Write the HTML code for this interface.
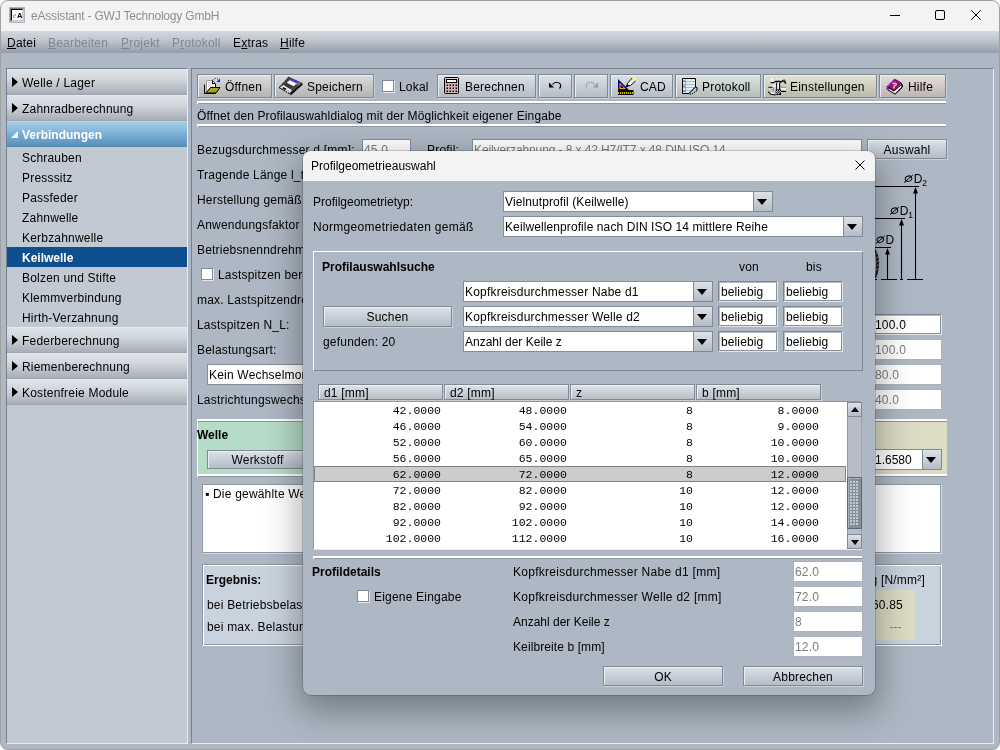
<!DOCTYPE html>
<html lang="de"><head><meta charset="utf-8"><title>eAssistant - GWJ Technology GmbH</title>
<style>
*{box-sizing:border-box;margin:0;padding:0}
html,body{width:1000px;height:750px;overflow:hidden;background:#fff}
body{font-family:"Liberation Sans",sans-serif;font-size:12px;color:#000;position:relative}
.a{position:absolute;white-space:nowrap}
#win{will-change:transform;left:0;top:0;width:1000px;height:750px;border-radius:8px;overflow:hidden;background:#adb8c4}
#winb{left:0;top:0;width:1000px;height:750px;border-radius:8px;border:1px solid #a0a0a0;pointer-events:none}
#title{left:0;top:0;width:1000px;height:31px;background:#f3f3f3}
#title .t{left:31px;top:9px;font-size:12px;letter-spacing:-.2px;color:#8e8e8e;line-height:15px}
#menu{left:0;top:31px;width:1000px;height:22px;background:linear-gradient(#d3d8df 0%,#c1c7cf 40%,#949da8 100%)}
#menu span{position:absolute;top:5px;line-height:15px;font-size:12px;letter-spacing:.2px}
#menu .d{color:#7f8791}
u{text-decoration:underline;text-underline-offset:1px}
/* sidebar */
#side{left:6px;top:68px;width:182px;height:676px;background:#c1c9d2;border:1px solid #78828d;border-right-color:#e9edf1;border-bottom-color:#e9edf1}
.sh{left:0;width:180px;height:26px;background:linear-gradient(#dfe3e8 0%,#d3d8de 35%,#bfc5cd 65%,#a7aeb8 100%);border-top:1px solid #e6e9ed;border-bottom:1px solid #9da5af;line-height:24px;padding:1px 0 0 15px;font-size:12px;letter-spacing:.2px}
.sh.sel{background:linear-gradient(#a6cce6 0%,#84b6da 40%,#6ba2cb 70%,#5b90b9 100%);color:#fff;font-weight:bold;border-top-color:#b4d4ea;border-bottom-color:#5587ad;letter-spacing:0}
.tri{position:absolute;left:5px;top:7px;width:0;height:0;border-left:6px solid #000;border-top:5px solid transparent;border-bottom:5px solid transparent}
.tri2{position:absolute;left:4px;top:9px;width:0;height:0;border-bottom:7px solid #fff;border-left:7px solid transparent}
.si{left:15px;height:20px;line-height:22px;font-size:12px;letter-spacing:.2px}
.sisel{left:0;width:180px;height:20px;background:#0e4f90;color:#fff;font-weight:bold;line-height:22px;padding-left:15px;font-size:12px}
/* main */
#main{left:191px;top:68px;width:803px;height:676px;border:1px solid #78828d;border-right-color:#e9edf1;border-bottom-color:#e9edf1;background:#adb8c4}
.btn{height:24px;border:1px solid #808a95;background:linear-gradient(#dde2e8 0%,#b4bcc6 100%);box-shadow:inset 1px 1px 0 #eceff2,1px 1px 0 #c9d0d8;line-height:22px;text-align:center;font-size:12px;letter-spacing:.2px}
.tf{height:21px;background:#fff;border:1px solid #848e99;line-height:19px;padding:1px 0 0 1px;font-size:12px;letter-spacing:.2px}
.tf.dis{color:#7c7c7c}
.lb{font-size:12px;letter-spacing:.2px;line-height:15px}
.sep{height:3px;background:linear-gradient(#fff 0,#fff 2px,#8d97a2 2px,#8d97a2 3px);border-left:1px solid #fff}
.cb{width:12px;height:12px;background:#fff;border:1px solid #7f8a96;box-shadow:1px 1px 0 #e4e8ed}
.btn.g{background:linear-gradient(#dcdcdc 0%,#b4b4b4 100%)}
.btn.gr{background:linear-gradient(#dde4df 0%,#b4beb9 100%)}
.btn.ye{background:linear-gradient(#e2e3d6 0%,#babbab 100%)}
.btn.pk{background:linear-gradient(#e5dedb 0%,#bfb5b2 100%)}
.dn{position:absolute;left:50%;top:50%;margin:-3px 0 0 -5px;width:0;height:0;border-top:6px solid #000;border-left:5px solid transparent;border-right:5px solid transparent}
.mono{font-family:"Liberation Mono",monospace;font-size:11.500px;line-height:18px}
.th{height:16px;border:1px solid #808a95;background:linear-gradient(#dfe4e9 0%,#b6bec8 100%);box-shadow:inset 1px 1px 0 #eef1f4,1px 1px 0 #c9d0d8;line-height:15px;padding:1px 0 0 5px;font-size:12px;letter-spacing:.2px}
.up{position:absolute;left:50%;top:50%;margin:-3px 0 0 -4px;width:0;height:0;border-bottom:5px solid #000;border-left:4px solid transparent;border-right:4px solid transparent}
.thumb{border:1px solid #5f6974;background:#858f9a;box-shadow:inset 1px 1px 0 #a9b2bc}.thumb:after{content:'';position:absolute;left:2px;right:2px;top:3px;bottom:3px;background-image:radial-gradient(circle at 1px 1px,#c3cad2 0.7px,transparent 0.9px);background-size:3px 3px}
.tf.bev{border-color:#7c8691 #e3e7eb #e3e7eb #7c8691;box-shadow:inset 1px 1px 0 #b4bcc6,inset -1px -1px 0 #87919c;padding-left:2px}
/* dialog */
#dlg{left:303px;top:151px;width:572px;height:544px;border-radius:8px;background:#adb8c4;box-shadow:0 0 0 1px rgba(0,0,0,.16),0 12px 34px 4px rgba(0,0,0,.34);overflow:hidden}
#dlgt{left:0;top:0;width:572px;height:30px;background:#f3f3f3}
</style></head><body>
<div id="win" class="a">
 <div id="title" class="a">
  <svg class="a" style="left:9px;top:7px" width="16" height="16" viewBox="0 0 16 16"><rect x="0" y="0" width="16" height="16" fill="#a9b6c3"/><rect x="1" y="1" width="14" height="14" fill="#cdcdcd"/><path d="M1 1H15L14 2H2V14L1 15Z" fill="#7c7c7c"/><path d="M2 2H14L13 3H3V13L2 14Z" fill="#000"/><rect x="3" y="3" width="10" height="10" fill="#fff"/><text x="8" y="10.500" font-family="Liberation Sans,sans-serif" font-size="7.500" font-weight="bold" fill="#000">A</text><text x="4" y="10.500" font-family="Liberation Serif,serif" font-size="7.500" font-style="italic" fill="#666">e</text></svg>
  <div class="a t">eAssistant - GWJ Technology GmbH</div>
  <svg class="a" style="left:885px;top:5px" width="105" height="22" viewBox="0 0 105 22" fill="none" stroke="#000" stroke-width="1"><path d="M5 10.500H15"/><rect x="50.5" y="5.500" width="9" height="9" rx="1.5"/><path d="M86.300 5.300L95.700 14.700M95.700 5.300L86.300 14.700"/></svg>
 </div>
 <div id="menu" class="a">
  <span style="left:7px"><u>D</u>atei</span><span class="d" style="left:48px"><u>B</u>earbeiten</span><span class="d" style="left:121px"><u>P</u>rojekt</span><span class="d" style="left:172px">P<u>r</u>otokoll</span><span style="left:233px">E<u>x</u>tras</span><span style="left:280px"><u>H</u>ilfe</span>
 </div>
 <div id="side" class="a">
  <div class="a sh" style="top:0"><i class="tri"></i>Welle / Lager</div>
  <div class="a sh" style="top:26px"><i class="tri"></i>Zahnradberechnung</div>
  <div class="a sh sel" style="top:52px"><i class="tri2"></i>Verbindungen</div>
  <div class="a si" style="top:78px">Schrauben</div>
  <div class="a si" style="top:98px">Presssitz</div>
  <div class="a si" style="top:118px">Passfeder</div>
  <div class="a si" style="top:138px">Zahnwelle</div>
  <div class="a si" style="top:158px">Kerbzahnwelle</div>
  <div class="a sisel" style="top:178px">Keilwelle</div>
  <div class="a si" style="top:198px">Bolzen und Stifte</div>
  <div class="a si" style="top:218px">Klemmverbindung</div>
  <div class="a si" style="top:238px">Hirth-Verzahnung</div>
  <div class="a sh" style="top:258px"><i class="tri"></i>Federberechnung</div>
  <div class="a sh" style="top:284px"><i class="tri"></i>Riemenberechnung</div>
  <div class="a sh" style="top:310px"><i class="tri"></i>Kostenfreie Module</div>
 </div>
 <div id="main" class="a">
 
  <!-- toolbar -->
  <div class="a btn g" style="left:5px;top:5px;width:75px"></div>
  <div class="a btn g" style="left:82px;top:5px;width:100px"></div>
  <div class="a cb" style="left:190px;top:11px"></div><div class="a lb" style="left:207px;top:11px">Lokal</div>
  <div class="a btn" style="left:245px;top:5px;width:99px"></div>
  <div class="a btn" style="left:346px;top:5px;width:34px"></div>
  <div class="a btn" style="left:382px;top:5px;width:34px"></div>
  <div class="a btn" style="left:418px;top:5px;width:63px"></div>
  <div class="a btn gr" style="left:483px;top:5px;width:86px"></div>
  <div class="a btn ye" style="left:571px;top:5px;width:114px"></div>
  <div class="a btn pk" style="left:687px;top:5px;width:67px"></div>

  <svg class="a" style="left:0;top:0" width="770" height="34" viewBox="192 69 770 34" fill="none" stroke-width="1">
   <!-- open -->
   <path d="M206 80H212.500L215.500 83V88H210L206 92Z" fill="#fff"/>
   <path d="M206.500 92V80.500H212.500" stroke="#9a9a9a"/>
   <path d="M208 82.500H211.500M208 84.500H213.500M208 86.500H213.500" stroke="#d0d0d0"/>
   <path d="M212 80.500L215.500 84V87.500" stroke="#000"/>
   <path d="M212 80V84H215.500Z" fill="#000"/><rect x="213" y="82" width="1" height="1" fill="#fff"/>
   <path d="M204.500 84.500V93.500H216" stroke="#000"/>
   <path d="M205.500 85.500V92.500" stroke="#d6d64c"/>
   <path d="M206 93L210.500 87.500H220L216 93Z" fill="#a6a61c" stroke="#000"/>
   <path d="M213 80.500C214 78 217 77.500 218.500 80" stroke="#2b2bff" stroke-dasharray="1.5 1"/>
   <path d="M220 78.500V82H216.500Z" fill="#1a1aff"/>
   <!-- save -->
   <path d="M288.500 77L302.500 83.500L291 94.500L279 87.500Z" fill="#3c3c3c" stroke="#2a1a2a" stroke-dasharray="1 1"/>
   <path d="M289 77.500L302 83.500L291 94L279.500 87.500Z" fill="#454545"/>
   <path d="M297.500 81.500L302 83.700L299.500 86.200L295.300 84Z" fill="#6c6c6c"/>
   <path d="M290.300 79.700L297.300 83L293.600 86.300L286.800 82.700Z" fill="#fff"/>
   <path d="M290.500 78.500L297.500 82L296.500 83.500L289.500 80Z" fill="#3a3aff"/>
   <path d="M280 87.500L283.500 85L292 90.300L289 93.500Z" fill="#e8e8e8"/>
   <path d="M283.500 87L286.500 88.700L285.300 90.300L282.300 88.600Z" fill="#111"/>
   <path d="M286.500 90L289.500 91.500" stroke="#888" stroke-dasharray="1 1"/>
   <path d="M286 83.500L292 87M285 85L290 88" stroke="#111" stroke-dasharray="1 1"/>
   <path d="M290.800 94.300L302.300 83.900" stroke="#000" stroke-width="1.500"/>
   <path d="M279.300 87.800L290.800 94.300" stroke="#000" stroke-width="1" stroke-dasharray="1.500 1"/>
   <!-- calc -->
   <rect x="444.500" y="77.500" width="14" height="16" rx="1" fill="#d8b0b6" stroke="#000"/>
   <path d="M445.500 78.500H457.500" stroke="#ecd3d6"/>
   <rect x="446.500" y="79.500" width="10" height="3" fill="#fff" stroke="#000"/>
   <g fill="#000"><rect x="446.500" y="84.500" width="1.500" height="1.500"/><rect x="449.500" y="84.500" width="1.500" height="1.500"/><rect x="452.500" y="84.500" width="1.500" height="1.500"/><rect x="455.500" y="84.500" width="1.500" height="1.500"/>
   <rect x="446.500" y="87.500" width="1.500" height="1.500"/><rect x="449.500" y="87.500" width="1.500" height="1.500"/><rect x="452.500" y="87.500" width="1.500" height="1.500"/><rect x="455.500" y="87.500" width="1.500" height="1.500"/>
   <rect x="446.500" y="90.500" width="1.500" height="1.500"/><rect x="449.500" y="90.500" width="1.500" height="1.500"/><rect x="452.500" y="90.500" width="1.500" height="1.500"/><rect x="455.500" y="90.500" width="1.500" height="1.500"/></g>
   <!-- undo / redo -->
   <path d="M549 82.500V87.500H554Z" fill="#000"/>
   <path d="M552.500 84.500C554.500 81.500 559 81.500 560.500 84.500C561 86 560.500 87.500 559.500 88.500" stroke="#000" stroke-width="1.200"/>
   <path d="M598 82.500V87.500H593Z" fill="#9a9a9a"/>
   <path d="M594.500 84.500C592.500 81.500 588 81.500 586.500 84.500C586 86 586.500 87.500 587.500 88.500" stroke="#9a9a9a" stroke-width="1.100" stroke-dasharray="2 .6"/>
   <!-- CAD -->
   <path d="M618 79V90.500H629.500Z" fill="#000080"/>
   <path d="M619.500 82.500V89H626Z" fill="#ff9a0a"/>
   <path d="M621 85.500V87.500H623Z" fill="#000080" stroke="#000080"/>
   <rect x="618" y="90" width="15.500" height="5" fill="#000"/>
   <path d="M618 93H633" stroke="#ff0" stroke-width="1.600" stroke-dasharray="1.200 .8"/>
   <path d="M626.500 86.500L627.500 83.500L632 78L635.500 81L630.500 85.500Z" fill="#fff" stroke="#000"/>
   <path d="M631.500 78L634 76.500L636.500 79L635.500 81.500Z" fill="#ff0"/>
   <path d="M633 77L635.500 80" stroke="#fff"/>
   <path d="M626 87L628.500 85.500L627.500 84.500Z" fill="#000" stroke="#000"/>
   <!-- Protokoll -->
   <path d="M682.500 78.500H695.500V87L689 93.500H682.500Z" fill="#eceaea" stroke="#000" stroke-linejoin="miter"/>
   <path d="M683 81.500H695M683 84.500H695M683 87.500H694M683 90.500H691" stroke="#8cc4ea"/>
   <path d="M685.500 79V93" stroke="#ff7f7f"/>
   <path d="M684 80.500V82M684 85.500V87M684 90.500V92" stroke="#222"/>
   <path d="M689 93.500L695.500 87L697 87.500V90.500L692 93.500Z" fill="#c4c4c4"/>
   <path d="M689 93.500L695.500 87L697 87.500V90.500" stroke="#000"/>
   <path d="M697 90.500L692 94H689" stroke="#000" stroke-dasharray="1.500 .8"/>
   <!-- settings -->
   <path d="M770.400 77.300H781C783.500 77.800 785.600 80.300 786 83.600C785 82 784 81 782.600 80.700L780.600 82.300L780 81.200H776L773.200 82.800H770.400Z" fill="#d6d6d6"/>
   <path d="M771 78H774L773 81.500H771Z" fill="#f4f4f4"/>
   <path d="M776 78H781.500L783.500 79.500H775.500Z" fill="#e9e9e9"/>
   <path d="M770.700 82.700H773.300L775.900 81.300H780.100L780.700 82.400L782.700 80.700C784.200 81.100 785.200 82.200 785.800 83.800" stroke="#000" stroke-width="1.200"/>
   <path d="M785.700 83.300C785.500 81.600 784.900 80.300 784 79.400" stroke="#222" stroke-width="1"/>
   <path d="M773 84.500H776.500V94.500H772L768.500 91.700L771.500 92.300L772.800 91V88L771.500 87L768.800 86.800Z" fill="#d0d0d0"/>
   <path d="M769.500 86L773 84.800H776V86.500H772Z" fill="#f0f0f0"/>
   <path d="M769.500 92.300L772 94H774.500V93L772.500 92.800Z" fill="#f2f2f2"/>
   <path d="M768.300 87.300H772.500M768.200 91.600L770.800 94.300L775.500 95" stroke="#000" stroke-width="1.100"/>
   <path d="M773.300 87.500V91.500" stroke="#777"/>
   <rect x="776.500" y="82.800" width="3.200" height="6.700" fill="#e6e6e6"/>
   <path d="M776.700 82.500V89.500M779.600 82.500V89.500" stroke="#000" stroke-width="1.100"/>
   <path d="M778 83.500V89" stroke="#fff" stroke-width="1.100"/>
   <rect x="775.700" y="89.300" width="5.300" height="5.700" fill="#000"/>
   <g fill="#e8e8e8"><rect x="777" y="90.300" width="1" height="1"/><rect x="779" y="90.300" width="1" height="1"/><rect x="778" y="91.300" width="1" height="1"/><rect x="777" y="92.300" width="1" height="1"/><rect x="779" y="92.300" width="1" height="1"/><rect x="778" y="93.300" width="1" height="1"/><rect x="776" y="91.300" width="1" height="1"/><rect x="776" y="93.300" width="1" height="1"/><rect x="780" y="91.300" width="1" height="1"/></g>
   <path d="M781 87.300H786V91.200H781Z" fill="#e9e9e9"/><path d="M780.500 87.300H786" stroke="#8c8c8c"/><path d="M781 88.500H786" stroke="#fff"/><path d="M781 91.400H786" stroke="#000" stroke-width="1.100"/>
   <!-- help -->
   <path d="M888 87.500L894 91L902 84V87L895 94L888 90Z" fill="#e8ece8" stroke="#000"/>
   <path d="M894.500 79L901.500 83L894 90.500L887 86.500Z" fill="#9c06a8" stroke="#000" stroke-width=".6"/>
   <path d="M887.500 86L894 79.500" stroke="#ddd" stroke-dasharray="1 1"/>
   <path d="M887 86.500V90M895 94.500L902.500 87.500" stroke="#9c06a8"/>
   <path d="M901.500 83.500L902.500 87" stroke="#000"/>
   <text x="892" y="88.300" font-family="Liberation Sans,sans-serif" font-weight="bold" font-size="8" fill="#fff200" stroke="#fff200" stroke-width=".3" transform="rotate(10 895 85)">?</text>
  </svg>
  <div class="a lb" style="left:33px;top:11px">Öffnen</div>
  <div class="a lb" style="left:115px;top:11px">Speichern</div>
  <div class="a lb" style="left:273px;top:11px">Berechnen</div>
  <div class="a lb" style="left:448px;top:11px">CAD</div>
  <div class="a lb" style="left:510px;top:11px">Protokoll</div>
  <div class="a lb" style="left:598px;top:11px">Einstellungen</div>
  <div class="a lb" style="left:716px;top:11px">Hilfe</div>
  <div class="a sep" style="left:5px;top:32px;width:749px"></div>
  <div class="a lb" style="left:5px;top:40px;letter-spacing:.12px">Öffnet den Profilauswahldialog mit der Möglichkeit eigener Eingabe</div>
  <div class="a sep" style="left:5px;top:55px;width:749px"></div>
  <!-- form -->
  <div class="a lb" style="left:5px;top:74px">Bezugsdurchmesser d [mm]:</div>
  <div class="a tf dis" style="left:170px;top:70px;width:49px">45.0</div>
  <div class="a lb" style="left:235px;top:74px">Profil:</div>
  <div class="a tf dis" style="left:280px;top:70px;width:390px;letter-spacing:-.1px">Keilverzahnung - 8 x 42 H7/IT7 x 48 DIN ISO 14</div>
  <div class="a btn" style="left:675px;top:70px;width:80px;height:20px;line-height:20px">Auswahl</div>
  <div class="a lb" style="left:5px;top:99px">Tragende Länge l_tr [mm]:</div>
  <div class="a lb" style="left:5px;top:124px">Herstellung gemäß</div>
  <div class="a lb" style="left:5px;top:149px">Anwendungsfaktor K_A:</div>
  <div class="a lb" style="left:5px;top:174px">Betriebsnenndrehmoment T [Nm]:</div>
  <div class="a cb" style="left:9px;top:199px"></div><div class="a lb" style="left:26px;top:199px">Lastspitzen berücksichtigen</div>
  <div class="a lb" style="left:5px;top:224px">max. Lastspitzendrehmoment T_max [Nm]:</div>
  <div class="a lb" style="left:5px;top:249px">Lastspitzen N_L:</div>
  <div class="a lb" style="left:5px;top:274px">Belastungsart:</div>
  <div class="a tf" style="left:15px;top:295px;width:300px">Kein Wechselmoment</div>
  <div class="a lb" style="left:5px;top:324px">Lastrichtungswechsel N_W:</div>
  <div class="a tf bev" style="left:600px;top:245px;width:150px;padding-left:82px">100.0</div>
  <div class="a tf dis" style="left:600px;top:270px;width:150px;padding-left:82px;border-color:#a9b3be">100.0</div>
  <div class="a tf dis" style="left:600px;top:295px;width:150px;padding-left:82px;border-color:#a9b3be">80.0</div>
  <div class="a tf dis" style="left:600px;top:320px;width:150px;padding-left:82px;border-color:#a9b3be">40.0</div>
  <!-- diagram -->
  <svg class="a" style="left:659px;top:94px" width="100" height="125" viewBox="851 163 100 125" fill="none" stroke="#000" stroke-width="1.100">
   <path d="M860 186.500H919M915.500 188V279M860 218.500H905M901.500 220V279M860 247.500H891M887.500 249V279M875 279.500H877M881 279.500H897M900 279.500H903M907 279.500H923"/>
   <path d="M915.500 187L918 193.500H913Z M901.500 219L904 225.500H899Z M887.500 248L890 254.500H885Z" fill="#000" stroke="none"/>
   <path d="M875 249.500C880 257 879.500 269 875.500 278C877 268 877 258 875 249.500Z" fill="#111" stroke="#111" stroke-width=".8"/>
   <path d="M875.500 254L878.500 252.500M876 258L879 256.500M876.200 262L879.200 260.500M876.200 266L879 264.500M876 270L878.500 268.500" stroke="#c9ced4" stroke-width=".6"/>
   <g fill="#000" stroke="none" font-family="Liberation Sans,sans-serif" font-size="12">
    <text x="913.700" y="182.800">D</text><text x="922.300" y="185.800" font-size="8.500">2</text>
    <text x="899.700" y="214.800">D</text><text x="908.300" y="217.800" font-size="8.500">1</text>
    <text x="885.500" y="243.800">D</text>
   </g>
   <g stroke-width="1"><ellipse cx="908.5" cy="178.7" rx="3.300" ry="2.600" transform="rotate(-22 908.5 178.7)"/><path d="M903.9 182.7L912.8 175.1"/><ellipse cx="894.5" cy="210.7" rx="3.300" ry="2.600" transform="rotate(-22 894.5 210.7)"/><path d="M889.9 214.7L898.8 207.1"/><ellipse cx="880.3" cy="239.7" rx="3.300" ry="2.600" transform="rotate(-22 880.3 239.7)"/><path d="M875.6999999999999 243.7L884.5999999999999 236.1"/></g>
  </svg>
  <!-- green / yellow panels -->
  <div class="a" style="left:5px;top:350px;width:381px;height:58px;background:linear-gradient(#fff 0,#fff 2px,#8d97a2 2px,#8d97a2 3px,#b5dcc6 3px,#b5dcc6 55px,#fff 55px,#fff 57px,#8d97a2 57px,#8d97a2 58px);border-left:1px solid #fff"></div>
  <div class="a lb" style="left:5px;top:359px;font-weight:bold;letter-spacing:0">Welle</div>
  <div class="a btn" style="left:15px;top:381px;width:101px;height:19px;line-height:18px">Werkstoff</div>
  <div class="a" style="left:386px;top:350px;width:369px;height:58px;background:linear-gradient(#fff 0,#fff 2px,#8d97a2 2px,#8d97a2 3px,#dcdcc5 3px,#dcdcc5 55px,#fff 55px,#fff 57px,#8d97a2 57px,#8d97a2 58px)"></div>
  <div class="a tf" style="left:600px;top:380px;width:132px;padding-left:82px;letter-spacing:0">1.6580</div>
  <div class="a btn" style="left:730px;top:380px;width:20px;height:21px;box-shadow:none"><i class="dn" style="margin-left:-6px"></i></div>
  <!-- text area -->
  <div class="a" style="left:10px;top:415px;width:739px;height:69px;background:#fff;border:1px solid #8e98a3;box-shadow:1px 1px 0 #d5dbe1"></div>
  <div class="a lb" style="left:13px;top:418px">▪ Die gewählte Welle-Nabe-Verbindung ist ausreichend dimensioniert.</div>
  <!-- result -->
  <div class="a" style="left:10px;top:495px;width:740px;height:82px;background:#c9d3de;border:1px solid #fff;border-top-color:#8d97a2;border-left-color:#8d97a2;box-shadow:inset 1px 1px 0 #fff,inset -1px -1px 0 #8d97a2"></div>
  <div class="a lb" style="left:14px;top:504px;font-weight:bold;letter-spacing:0">Ergebnis:</div>
  <div class="a lb" style="left:15px;top:529px">bei Betriebsbelastung:</div>
  <div class="a lb" style="left:15px;top:551px">bei max. Belastung:</div>
  <div class="a lb" style="right:68px;top:504px">Flächenpressung [N/mm²]</div>
  <div class="a" style="left:641px;top:521px;width:82px;height:50px;background:#dcdcc4"></div>
  <div class="a lb" style="right:90px;top:529px">60.85</div>
  <div class="a lb" style="right:91px;top:551px;color:#777">---</div>
 </div>
 <div id="dlg" class="a">
  <div id="dlgt" class="a"></div>
 
  <div class="a" style="left:8px;top:8px;font-size:12px;line-height:15px">Profilgeometrieauswahl</div>
  <svg class="a" style="left:551px;top:8px" width="13" height="13" viewBox="0 0 13 13" fill="none" stroke="#000" stroke-width="1"><path d="M1.500 1.500L10.500 10.500M10.500 1.500L1.500 10.500"/></svg>
  <div class="a lb" style="left:10px;top:44px;letter-spacing:0">Profilgeometrietyp:</div>
  <div class="a tf" style="left:200px;top:40px;width:251px;letter-spacing:.1px">Vielnutprofil (Keilwelle)</div>
  <div class="a btn" style="left:450px;top:40px;width:20px;height:21px;box-shadow:none"><i class="dn" style="margin-left:-6px"></i></div>
  <div class="a lb" style="left:10px;top:69px;letter-spacing:.3px">Normgeometriedaten gemäß</div>
  <div class="a tf" style="left:200px;top:65px;width:341px;letter-spacing:.1px">Keilwellenprofile nach DIN ISO 14 mittlere Reihe</div>
  <div class="a btn" style="left:540px;top:65px;width:20px;height:21px;box-shadow:none"><i class="dn" style="margin-left:-6px"></i></div>
  <div class="a" style="left:10px;top:100px;width:550px;height:120px;border:1px solid #fff;border-right-color:#808a95;border-bottom-color:#808a95"></div>
  <div class="a lb" style="left:19px;top:109px;font-weight:bold;letter-spacing:0">Profilauswahlsuche</div>
  <div class="a lb" style="left:436px;top:109px">von</div>
  <div class="a lb" style="left:503px;top:109px">bis</div>
  <div class="a tf" style="left:160px;top:130px;width:231px">Kopfkreisdurchmesser Nabe d1</div>
  <div class="a btn" style="left:390px;top:130px;width:20px;height:21px;box-shadow:none"><i class="dn" style="margin-left:-6px"></i></div>
  <div class="a tf" style="left:160px;top:155px;width:231px">Kopfkreisdurchmesser Welle d2</div>
  <div class="a btn" style="left:390px;top:155px;width:20px;height:21px;box-shadow:none"><i class="dn" style="margin-left:-6px"></i></div>
  <div class="a tf" style="left:160px;top:180px;width:231px;letter-spacing:0">Anzahl der Keile z</div>
  <div class="a btn" style="left:390px;top:180px;width:20px;height:21px;box-shadow:none"><i class="dn" style="margin-left:-6px"></i></div>
  <div class="a tf bev" style="left:415px;top:130px;width:60px;letter-spacing:.12px">beliebig</div><div class="a tf bev" style="left:480px;top:130px;width:60px;letter-spacing:.12px">beliebig</div>
  <div class="a tf bev" style="left:415px;top:155px;width:60px;letter-spacing:.12px">beliebig</div><div class="a tf bev" style="left:480px;top:155px;width:60px;letter-spacing:.12px">beliebig</div>
  <div class="a tf bev" style="left:415px;top:180px;width:60px;letter-spacing:.12px">beliebig</div><div class="a tf bev" style="left:480px;top:180px;width:60px;letter-spacing:.12px">beliebig</div>
  <div class="a btn" style="left:20px;top:155px;width:129px;height:21px;line-height:21px">Suchen</div>
  <div class="a lb" style="left:20px;top:184px">gefunden: 20</div>
  <!-- table -->
  <div class="a th" style="left:15px;top:233px;width:125px">d1 [mm]</div>
  <div class="a th" style="left:141px;top:233px;width:125px">d2 [mm]</div>
  <div class="a th" style="left:267px;top:233px;width:125px">z</div>
  <div class="a th" style="left:393px;top:233px;width:125px">b [mm]</div>
  <div class="a" style="left:10px;top:250px;width:549px;height:149px;background:#fff;border:1px solid #8e98a3;border-right-color:#e6eaee;border-bottom-color:#e6eaee"></div>
  <div class="a mono" style="right:434px;top:251px">42.0000</div>
  <div class="a mono" style="right:308px;top:251px">48.0000</div>
  <div class="a mono" style="right:182px;top:251px">8</div>
  <div class="a mono" style="right:56px;top:251px">8.0000</div>
  <div class="a mono" style="right:434px;top:267px">46.0000</div>
  <div class="a mono" style="right:308px;top:267px">54.0000</div>
  <div class="a mono" style="right:182px;top:267px">8</div>
  <div class="a mono" style="right:56px;top:267px">9.0000</div>
  <div class="a mono" style="right:434px;top:283px">52.0000</div>
  <div class="a mono" style="right:308px;top:283px">60.0000</div>
  <div class="a mono" style="right:182px;top:283px">8</div>
  <div class="a mono" style="right:56px;top:283px">10.0000</div>
  <div class="a mono" style="right:434px;top:299px">56.0000</div>
  <div class="a mono" style="right:308px;top:299px">65.0000</div>
  <div class="a mono" style="right:182px;top:299px">8</div>
  <div class="a mono" style="right:56px;top:299px">10.0000</div>
  <div class="a" style="left:11px;top:315px;width:532px;height:16px;background:#cccccc;border:1px solid #828282"></div>
  <div class="a mono" style="right:434px;top:315px">62.0000</div>
  <div class="a mono" style="right:308px;top:315px">72.0000</div>
  <div class="a mono" style="right:182px;top:315px">8</div>
  <div class="a mono" style="right:56px;top:315px">12.0000</div>
  <div class="a mono" style="right:434px;top:331px">72.0000</div>
  <div class="a mono" style="right:308px;top:331px">82.0000</div>
  <div class="a mono" style="right:182px;top:331px">10</div>
  <div class="a mono" style="right:56px;top:331px">12.0000</div>
  <div class="a mono" style="right:434px;top:347px">82.0000</div>
  <div class="a mono" style="right:308px;top:347px">92.0000</div>
  <div class="a mono" style="right:182px;top:347px">10</div>
  <div class="a mono" style="right:56px;top:347px">12.0000</div>
  <div class="a mono" style="right:434px;top:363px">92.0000</div>
  <div class="a mono" style="right:308px;top:363px">102.0000</div>
  <div class="a mono" style="right:182px;top:363px">10</div>
  <div class="a mono" style="right:56px;top:363px">14.0000</div>
  <div class="a mono" style="right:434px;top:379px">102.0000</div>
  <div class="a mono" style="right:308px;top:379px">112.0000</div>
  <div class="a mono" style="right:182px;top:379px">10</div>
  <div class="a mono" style="right:56px;top:379px">16.0000</div>

  <div class="a" style="left:544px;top:251px;width:15px;height:147px;background:#b5bec8;border-left:1px solid #8e98a3;border-right:1px solid #9aa4af"></div>
  <div class="a btn" style="left:544px;top:251px;width:15px;height:15px;box-shadow:none"><i class="up"></i></div>
  <div class="a btn" style="left:544px;top:383px;width:15px;height:15px;box-shadow:none"><i class="dn" style="margin:-2px 0 0 -4px;border-width:5px 4px 0 4px"></i></div>
  <div class="a thumb" style="left:544px;top:326px;width:15px;height:52px"></div>
  <div class="a sep" style="left:10px;top:405px;width:549px"></div>
  <div class="a lb" style="left:9px;top:414px;font-weight:bold;letter-spacing:0">Profildetails</div>
  <div class="a cb" style="left:54px;top:439px"></div><div class="a lb" style="left:71px;top:439px">Eigene Eingabe</div>
  <div class="a lb" style="left:210px;top:414px;letter-spacing:.28px">Kopfkreisdurchmesser Nabe d1 [mm]</div>
  <div class="a lb" style="left:210px;top:439px;letter-spacing:.28px">Kopfkreisdurchmesser Welle d2 [mm]</div>
  <div class="a lb" style="left:210px;top:464px;letter-spacing:0">Anzahl der Keile z</div>
  <div class="a lb" style="left:210px;top:489px;letter-spacing:.1px">Keilbreite b [mm]</div>
  <div class="a tf dis" style="left:490px;top:410px;width:70px;border-color:#a9b3be">62.0</div>
  <div class="a tf dis" style="left:490px;top:435px;width:70px;border-color:#a9b3be">72.0</div>
  <div class="a tf dis" style="left:490px;top:460px;width:70px;border-color:#a9b3be">8</div>
  <div class="a tf dis" style="left:490px;top:485px;width:70px;border-color:#a9b3be">12.0</div>
  <div class="a btn" style="left:300px;top:515px;width:120px;height:20px;line-height:21px">OK</div>
  <div class="a btn" style="left:440px;top:515px;width:120px;height:20px;line-height:21px">Abbrechen</div>

 </div>
 <div id="winb" class="a"></div>
</div>
</body></html>
